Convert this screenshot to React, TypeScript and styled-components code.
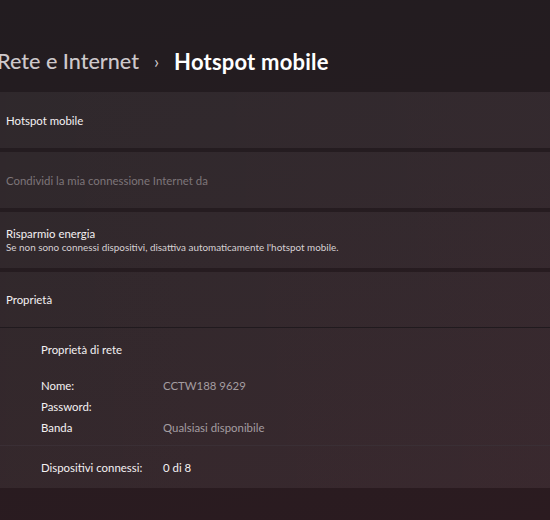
import React from "react";
import styled, { createGlobalStyle } from "styled-components";

const Global = createGlobalStyle`
  html, body { margin: 0; padding: 0; }
  body {
    width: 550px;
    height: 520px;
    overflow: hidden;
    background: linear-gradient(170deg, #221c20 0%, #251c20 40%, #2b1b20 100%);
    font-family: Lato, "Noto Sans", sans-serif;
    color: #f2eff1;
  }
`;

const Page = styled.div`
  display: flex;
  flex-direction: column;
  width: 550px;
  height: 520px;
`;

const Header = styled.h1`
  margin: 0 0 0 -3px;
  height: 92px;
  display: flex;
  align-items: center;
  gap: 15px;
  padding-top: 30px;
  box-sizing: border-box;
  font-size: 22px;
  font-weight: 700;
  white-space: nowrap;
`;

const Crumb = styled.span<{ $current?: boolean }>`
  color: ${(p) => (p.$current ? "#ffffff" : "#cdc8cb")};
  font-weight: ${(p) => (p.$current ? 700 : 500)};
  font-size: ${(p) => (p.$current ? "22px" : "21.6px")};
  letter-spacing: ${(p) => (p.$current ? "0.2px" : "0")};
`;

const Chevron = styled.span`
  color: #cdc8cb;
  font-size: 18px;
  font-weight: 400;
`;

const List = styled.div`
  display: flex;
  flex-direction: column;
  gap: 4px;
`;

const Card = styled.div`
  background: linear-gradient(90deg, rgba(255,255,255,0.055), rgba(255,220,235,0.07));
  box-sizing: border-box;
`;

const RowCard = styled(Card)`
  height: 56px;
  padding: 0 6px;
  display: flex;
  flex-direction: column;
  justify-content: center;
`;

const Title = styled.div<{ $dim?: boolean }>`
  font-size: 11.4px;
  line-height: 15px;
  color: ${(p) => (p.$dim ? "#7d7579" : "#f4f1f3")};
`;

const Sub = styled.div`
  font-size: 9.9px;
  line-height: 13px;
  color: #d6d1d4;
`;

const Expander = styled.div`
  display: flex;
  flex-direction: column;
`;

const ExpHeader = styled(RowCard)`
  border-bottom: 1px solid #201a1e;
`;

const ExpBody = styled(Card)`
  padding: 14px 0 0 41px;
  height: 118px;
  border-bottom: 1px solid #3a2f35;
`;

const Section = styled.div`
  font-size: 11.4px;
  line-height: 16px;
  color: #f4f1f3;
  margin-bottom: 20px;
`;

const PropGrid = styled.div`
  display: grid;
  grid-template-columns: 122px auto;
  row-gap: 5px;
  font-size: 11.4px;
  line-height: 16px;
`;

const Label = styled.div`
  color: #f4f1f3;
`;

const Value = styled.div<{ $strong?: boolean }>`
  color: ${(p) => (p.$strong ? "#f4f1f3" : "#a49da1")};
`;

const FooterRow = styled(Card)`
  height: 42px;
  padding: 0 0 0 41px;
  display: grid;
  grid-template-columns: 122px auto;
  align-items: center;
  font-size: 11.4px;
`;

export default function App() {
  return (
    <Page>
      <Global />
      <Header>
        <Crumb>Rete e Internet</Crumb>
        <Chevron>›</Chevron>
        <Crumb $current>Hotspot mobile</Crumb>
      </Header>
      <List>
        <RowCard>
          <Title>Hotspot mobile</Title>
        </RowCard>
        <RowCard>
          <Title $dim>Condividi la mia connessione Internet da</Title>
        </RowCard>
        <RowCard>
          <Title>Risparmio energia</Title>
          <Sub>Se non sono connessi dispositivi, disattiva automaticamente l'hotspot mobile.</Sub>
        </RowCard>
        <Expander>
          <ExpHeader>
            <Title>Proprietà</Title>
          </ExpHeader>
          <ExpBody>
            <Section>Proprietà di rete</Section>
            <PropGrid>
              <Label>Nome:</Label>
              <Value>CCTW188 9629</Value>
              <Label>Password:</Label>
              <Value></Value>
              <Label>Banda</Label>
              <Value>Qualsiasi disponibile</Value>
            </PropGrid>
          </ExpBody>
          <FooterRow>
            <Label>Dispositivi connessi:</Label>
            <Value $strong>0 di 8</Value>
          </FooterRow>
        </Expander>
      </List>
    </Page>
  );
}
